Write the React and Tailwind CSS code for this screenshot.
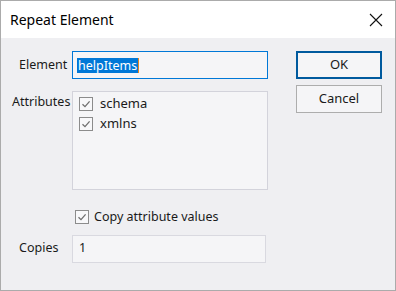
import React from "react";

function Check({ className = "" }) {
  return (
    <span
      className={
        "flex h-[14px] w-[14px] shrink-0 items-center justify-center border border-[#8c8c8c] bg-[#f8f8fa] " +
        className
      }
    >
      <svg width="10" height="10" viewBox="0 0 10 10">
        <path d="M1.5 5.2 L4 7.6 L8.6 2.4" fill="none" stroke="#6e6e6e" strokeWidth="1.3" />
      </svg>
    </span>
  );
}

export default function App() {
  return (
    <div
      className="flex h-[291px] w-[396px] flex-col border border-[#ababab] text-[12.5px] text-[#1a1a1a]"
      style={{ fontFamily: '"Segoe UI", "Noto Sans", sans-serif' }}
    >
      <div className="flex h-[37px] items-center justify-between bg-white pl-[9px] pr-[12px]">
        <span className="text-[14px] text-black">Repeat Element</span>
        <svg width="14" height="14" viewBox="0 0 14 14">
          <path d="M1 1 L13 13 M13 1 L1 13" stroke="#111" strokeWidth="1.1" />
        </svg>
      </div>

      <div className="flex flex-1 bg-[#efeff2]">
        <div className="flex w-[267px] flex-col pt-[13px]">
          <div className="flex h-[28px] items-center">
            <span className="w-[71px] pl-[18px]">Element</span>
            <div className="flex h-[28px] flex-1 items-center border border-[#0078d7] bg-[#f5f5f7] pl-[4px]">
              <span className="bg-[#0078d7] px-px leading-[15px] text-white">helpItems</span>
              <span className="h-[15px] w-px bg-[#e8861e]" />
            </div>
          </div>

          <div className="mt-[12px] flex">
            <span className="w-[71px] pl-[11px] pt-[2px]">Attributes</span>
            <div className="flex h-[99px] flex-1 flex-col gap-[6px] border border-[#d3d3db] bg-[#f5f5f7] pl-[6px] pt-[5px]">
              <div className="flex h-[14px] items-center gap-[7px]">
                <Check />
                <span className="text-[13px]">schema</span>
              </div>
              <div className="flex h-[14px] items-center gap-[7px]">
                <Check />
                <span className="text-[13px]">xmlns</span>
              </div>
            </div>
          </div>

          <div className="mt-[18px] flex items-center gap-[5px] pl-[74px]">
            <Check />
            <span>Copy attribute values</span>
          </div>

          <div className="mt-[8px] flex h-[28px] items-center">
            <span className="w-[71px] pl-[18px]">Copies</span>
            <div className="flex h-[28px] w-[194px] items-center border border-[#d9d9e0] bg-[#f5f5f7] pl-[6px]">
              1
            </div>
          </div>
        </div>

        <div className="ml-[28px] flex flex-col gap-[6px] pt-[13px]">
          <button className="h-[28px] w-[86px] border-2 border-[#005a9e] bg-[#f5f5f7] text-[13px]">OK</button>
          <button className="h-[28px] w-[86px] border border-[#adadad] bg-[#f5f5f7] text-[13px]">Cancel</button>
        </div>
      </div>
    </div>
  );
}
